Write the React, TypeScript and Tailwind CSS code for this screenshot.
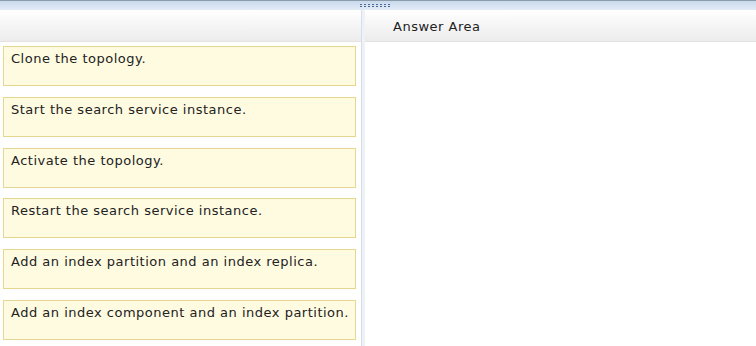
import React from "react";

const items = [
  "Clone the topology.",
  "Start the search service instance.",
  "Activate the topology.",
  "Restart the search service instance.",
  "Add an index partition and an index replica.",
  "Add an index component and an index partition.",
];

export default function App() {
  return (
    <div
      className="w-[756px] h-[346px] bg-white overflow-hidden flex flex-col text-[#222] tracking-[0.5px]"
      style={{ fontFamily: "Verdana, 'DejaVu Sans', sans-serif" }}
    >
      {/* top splitter bar */}
      <div className="relative h-[10px] shrink-0 border-t border-[#8c9cab] bg-gradient-to-b from-[#c9d9ec] to-[#e3ecf6]">
        <div className="absolute left-[360px] top-[3px] grid grid-cols-8 gap-x-[2px] gap-y-[1px]">
          {Array.from({ length: 16 }).map((_, i) => (
            <div key={i} className="w-[2px] h-[1px] bg-[#4a6a94]" />
          ))}
        </div>
      </div>

      <div className="flex flex-1 min-h-0">
        {/* left: choices */}
        <div className="w-[361px] shrink-0 flex flex-col">
          <div className="h-[32px] shrink-0 bg-gradient-to-b from-white to-[#ececec] border-b border-[#e2e2e2]" />
          <div className="flex flex-col gap-[10.8px] pt-[4px] pl-[3px] pr-[5px]">
            {items.map((t) => (
              <div
                key={t}
                className="h-[40px] border border-[#e5d690] bg-[#fffbe1] pl-[7px] pt-[4px] text-[13px] leading-[16px]"
              >
                {t}
              </div>
            ))}
          </div>
        </div>

        {/* divider */}
        <div className="w-[4px] shrink-0 bg-[#eef2f7] border-l border-[#d7e0ea]" />

        {/* right: answer area */}
        <div className="flex-1 flex flex-col">
          <div className="h-[32px] shrink-0 bg-gradient-to-b from-white to-[#ececec] border-b border-[#e2e2e2] flex items-center pl-[28px] pt-[2px] text-[13px]">
            Answer Area
          </div>
          <div className="flex-1 bg-white" />
        </div>
      </div>
    </div>
  );
}
